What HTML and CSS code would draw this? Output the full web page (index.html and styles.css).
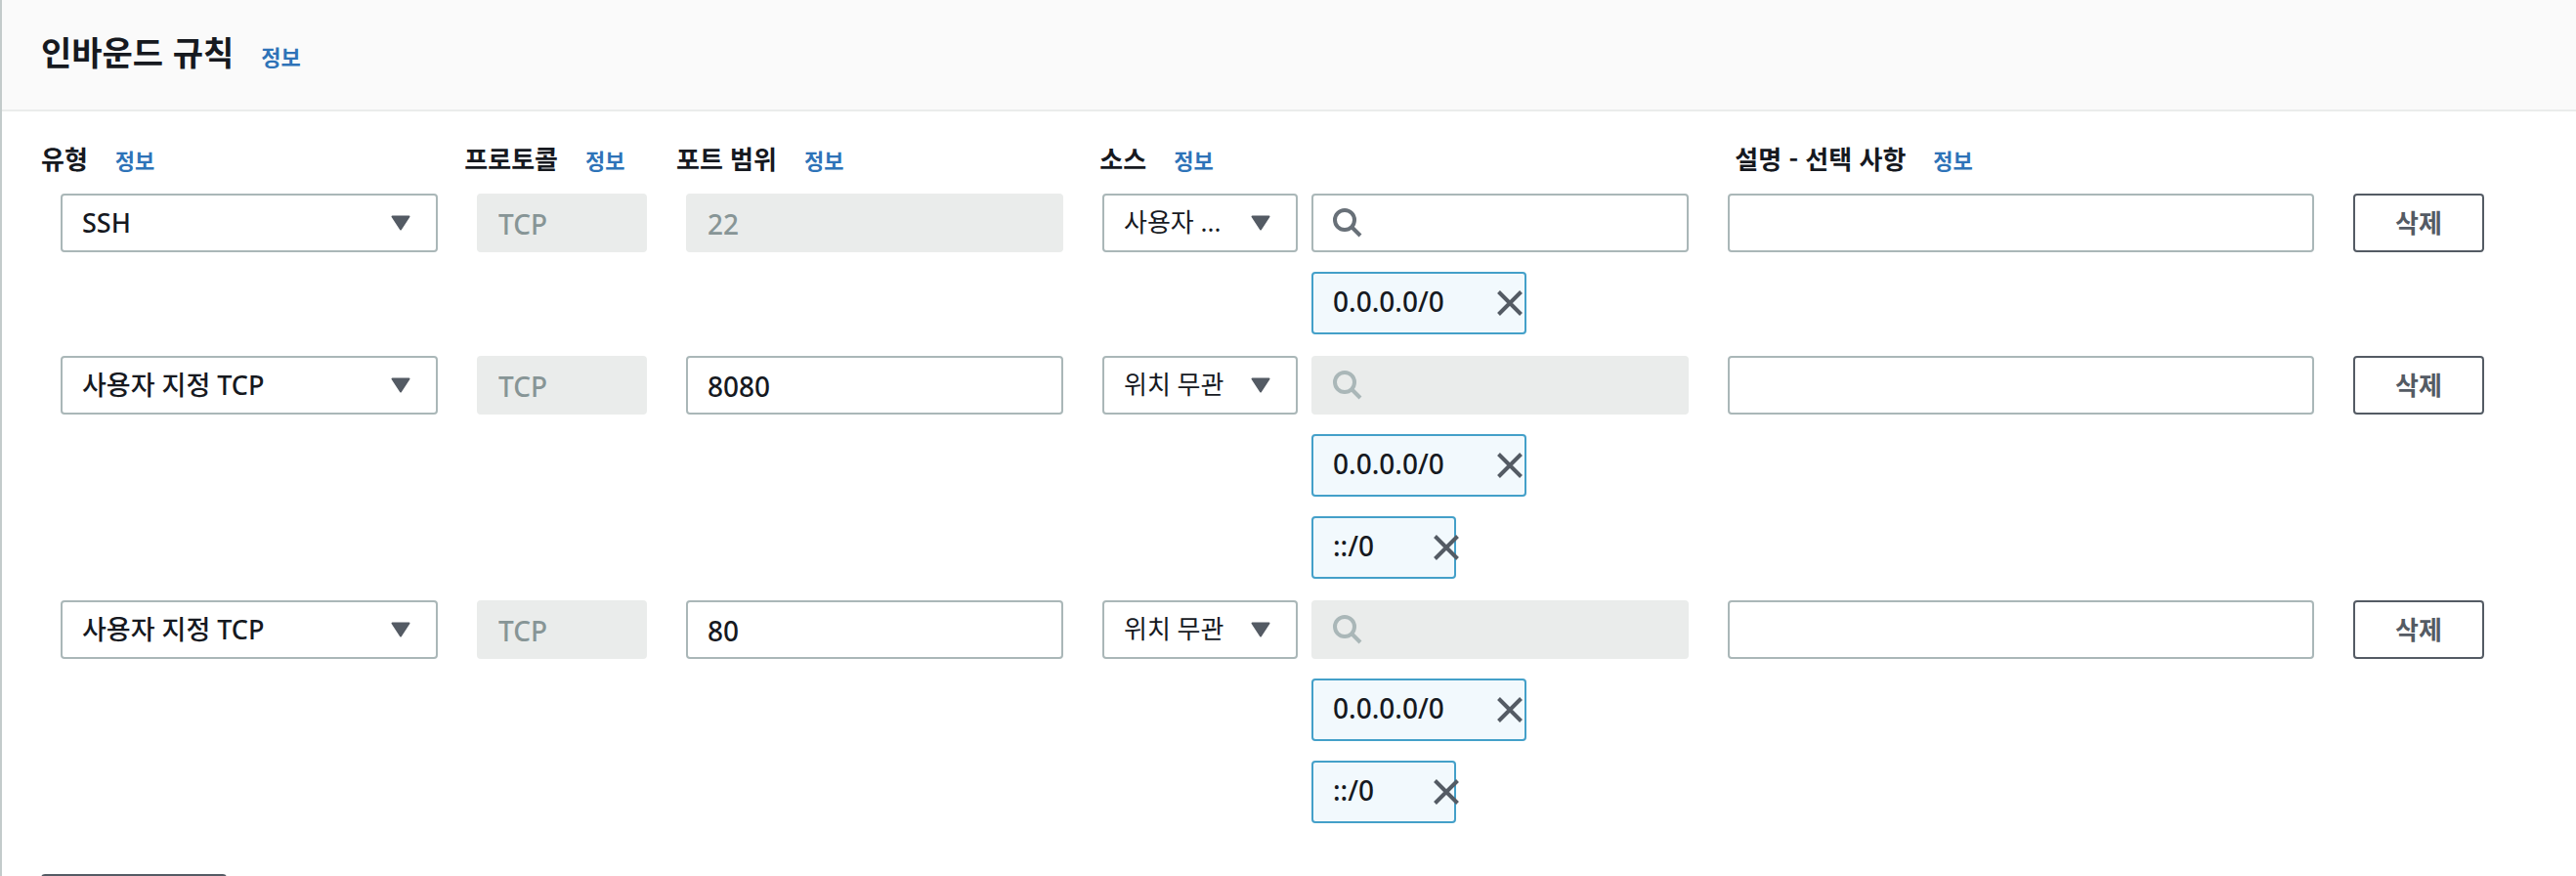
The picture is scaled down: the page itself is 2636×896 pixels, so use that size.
FILE: index.html
```html
<!DOCTYPE html>
<html lang="ko">
<head>
    <meta charset="UTF-8">
    <meta name="viewport" content="width=device-width, initial-scale=1.0">
    <title>인바운드 규칙</title>
    <link rel="stylesheet" href="styles.css">
</head>
<body>
    <!-- Shared icons -->
    <svg class="icon-defs" aria-hidden="true">
        <symbol id="icon-caret" viewBox="0 0 20 16">
            <path d="M1.5 1.5h17L10 14.5z" fill="currentColor" stroke="currentColor" stroke-width="2" stroke-linejoin="round"/>
        </symbol>
        <symbol id="icon-search" viewBox="0 0 30 30">
            <circle cx="12" cy="12" r="10" fill="none" stroke="currentColor" stroke-width="4"/>
            <path d="M19 19l9 9" fill="none" stroke="currentColor" stroke-width="4"/>
        </symbol>
        <symbol id="icon-close" viewBox="0 0 26 26">
            <path d="M1.5 1.5l23 23M24.5 1.5l-23 23" fill="none" stroke="currentColor" stroke-width="4"/>
        </symbol>
    </svg>

    <main class="panel">
        <header class="panel-header">
            <h1>인바운드 규칙</h1>
            <a href="#" class="info">정보</a>
        </header>

        <form class="panel-body">
            <div class="labels">
                <div class="label"><span id="typeLabel">유형</span><a href="#" class="info">정보</a></div>
                <div class="label"><span id="protocolLabel">프로토콜</span><a href="#" class="info">정보</a></div>
                <div class="label"><span id="portLabel">포트 범위</span><a href="#" class="info">정보</a></div>
                <div class="label"><span id="sourceLabel">소스</span><a href="#" class="info">정보</a></div>
                <div class="label"><span id="descLabel">설명 - 선택 사항</span><a href="#" class="info">정보</a></div>
            </div>

            <div class="rules">
                <div class="rule">
                    <div class="select">
                        <select aria-labelledby="typeLabel"><option>SSH</option></select>
                        <svg class="caret"><use href="#icon-caret"/></svg>
                    </div>
                    <input type="text" class="input" value="TCP" aria-labelledby="protocolLabel" disabled>
                    <input type="text" class="input" value="22" aria-labelledby="portLabel" disabled>
                    <div class="source">
                        <div class="select source-select">
                            <select aria-labelledby="sourceLabel"><option>사용자 ...</option></select>
                            <svg class="caret"><use href="#icon-caret"/></svg>
                        </div>
                        <div class="source-values">
                            <div class="search">
                                <input type="search" class="input" aria-labelledby="sourceLabel">
                                <svg class="search-icon"><use href="#icon-search"/></svg>
                            </div>
                            <div class="tag">0.0.0.0/0<button type="button" class="tag-close" aria-label="0.0.0.0/0 제거"><svg><use href="#icon-close"/></svg></button></div>
                        </div>
                    </div>
                    <input type="text" class="input" aria-labelledby="descLabel">
                    <button type="button" class="btn">삭제</button>
                </div>

                <div class="rule">
                    <div class="select">
                        <select aria-labelledby="typeLabel"><option>사용자 지정 TCP</option></select>
                        <svg class="caret"><use href="#icon-caret"/></svg>
                    </div>
                    <input type="text" class="input" value="TCP" aria-labelledby="protocolLabel" disabled>
                    <input type="text" class="input" value="8080" aria-labelledby="portLabel">
                    <div class="source">
                        <div class="select source-select">
                            <select aria-labelledby="sourceLabel"><option>위치 무관</option></select>
                            <svg class="caret"><use href="#icon-caret"/></svg>
                        </div>
                        <div class="source-values">
                            <div class="search">
                                <input type="search" class="input" aria-labelledby="sourceLabel" disabled>
                                <svg class="search-icon"><use href="#icon-search"/></svg>
                            </div>
                            <div class="tag">0.0.0.0/0<button type="button" class="tag-close" aria-label="0.0.0.0/0 제거"><svg><use href="#icon-close"/></svg></button></div>
                            <div class="tag">::/0<button type="button" class="tag-close" aria-label="::/0 제거"><svg><use href="#icon-close"/></svg></button></div>
                        </div>
                    </div>
                    <input type="text" class="input" aria-labelledby="descLabel">
                    <button type="button" class="btn">삭제</button>
                </div>

                <div class="rule">
                    <div class="select">
                        <select aria-labelledby="typeLabel"><option>사용자 지정 TCP</option></select>
                        <svg class="caret"><use href="#icon-caret"/></svg>
                    </div>
                    <input type="text" class="input" value="TCP" aria-labelledby="protocolLabel" disabled>
                    <input type="text" class="input" value="80" aria-labelledby="portLabel">
                    <div class="source">
                        <div class="select source-select">
                            <select aria-labelledby="sourceLabel"><option>위치 무관</option></select>
                            <svg class="caret"><use href="#icon-caret"/></svg>
                        </div>
                        <div class="source-values">
                            <div class="search">
                                <input type="search" class="input" aria-labelledby="sourceLabel" disabled>
                                <svg class="search-icon"><use href="#icon-search"/></svg>
                            </div>
                            <div class="tag">0.0.0.0/0<button type="button" class="tag-close" aria-label="0.0.0.0/0 제거"><svg><use href="#icon-close"/></svg></button></div>
                            <div class="tag">::/0<button type="button" class="tag-close" aria-label="::/0 제거"><svg><use href="#icon-close"/></svg></button></div>
                        </div>
                    </div>
                    <input type="text" class="input" aria-labelledby="descLabel">
                    <button type="button" class="btn">삭제</button>
                </div>
            </div>

            <button type="button" class="btn btn-add" aria-label="규칙 추가"></button>
        </form>
    </main>
</body>
</html>
```
FILE: styles.css
```css
* {
    margin: 0;
    padding: 0;
    box-sizing: border-box;
}

body {
    font-family: "Noto Sans", "Noto Sans CJK KR", sans-serif;
    font-size: 28px;
    font-weight: 500;
    color: #16191f;
    background: #fff;
    height: 100vh;
    overflow: hidden;
}

input,
select,
button {
    font: inherit;
    color: inherit;
}

.icon-defs {
    display: none;
}

.panel {
    min-height: 100vh;
    border-left: 2px solid #c3cbcb;
}

.panel-header {
    display: flex;
    align-items: baseline;
    gap: 28px;
    padding: 28px 40px 34px;
    background: #fafafa;
    border-bottom: 2px solid #eaeceb;
}

.panel-header h1 {
    font-family: "Noto Sans CJK KR", sans-serif;
    font-size: 34px;
    line-height: 50px;
    font-weight: 700;
}

.info {
    font-family: "Noto Sans CJK KR", sans-serif;
    font-size: 22px;
    font-weight: 700;
    color: #2e73b8;
    text-decoration: none;
}

.info:hover {
    text-decoration: underline;
}

.panel-body {
    padding-top: 28px;
}

.labels {
    display: grid;
    grid-template-columns: 2fr 1fr 2fr 3fr 4fr;
    padding-left: 40px;
    margin-right: -6px;
    margin-bottom: 15px;
}

.label {
    display: flex;
    align-items: baseline;
    gap: 28px;
    font-family: "Noto Sans CJK KR", sans-serif;
    font-size: 26px;
    line-height: 40px;
    font-weight: 700;
    white-space: nowrap;
}

.rules {
    display: grid;
    gap: 22px;
    padding: 0 94px 0 60px;
}

.rule {
    display: grid;
    grid-template-columns: 386fr 174fr 386fr 600fr 600fr 134px;
    gap: 40px;
    align-items: start;
}

.input,
.select select {
    width: 100%;
    min-width: 0;
    height: 60px;
    padding: 0 20px;
    border: 2px solid #aab7b8;
    border-radius: 4px;
    background: #fff;
    appearance: none;
    outline: none;
}

.input {
    padding-top: 2px;
}

.input:focus,
.select select:focus {
    border-color: #44a0c9;
}

.input:disabled {
    background: #eaeceb;
    border-color: #eaeceb;
    color: #879596;
}

/* control and its icon share one grid cell */
.select,
.search {
    display: grid;
    align-items: center;
}

.select select,
.select .caret,
.search .input,
.search .search-icon {
    grid-area: 1 / 1;
}

.select select {
    font-size: 27px;
    padding-right: 60px;
    padding-bottom: 2px;
}

.caret {
    width: 20px;
    height: 16px;
    margin-right: 28px;
    justify-self: end;
    color: #545b64;
    pointer-events: none;
}

.source {
    display: grid;
    grid-template-columns: 200fr 386fr;
    gap: 14px;
    align-items: start;
}

.source-select select {
    font-size: 26px;
    font-weight: 400;
    padding-right: 50px;
}

.source-values {
    display: flex;
    flex-direction: column;
    align-items: flex-start;
    gap: 20px;
}

.search {
    width: 100%;
}

.search .input {
    padding-left: 62px;
}

.search-icon {
    width: 30px;
    height: 30px;
    margin-left: 22px;
    color: #687078;
    pointer-events: none;
}

.input:disabled + .search-icon {
    color: #aab7b8;
}

.tag {
    position: relative;
    height: 64px;
    padding: 0 82px 0 20px;
    border: 2px solid #44a0c9;
    border-radius: 4px;
    background: #f2f9fd;
    line-height: 56px;
}

/* the cross may run over the edge of a short tag */
.tag-close {
    position: absolute;
    top: 17px;
    left: calc(92% - 10px);
    width: 26px;
    height: 26px;
    border: none;
    background: none;
    color: #545b64;
    cursor: pointer;
}

.tag-close svg {
    display: block;
    width: 26px;
    height: 26px;
}

.btn {
    height: 60px;
    padding-bottom: 4px;
    border: 2px solid #545b64;
    border-radius: 4px;
    background: #fff;
    color: #545b64;
    font-family: "Noto Sans CJK KR", sans-serif;
    font-size: 26px;
    font-weight: 700;
    cursor: pointer;
}

.btn:hover {
    background: #fafafa;
}

.btn-add {
    display: block;
    width: 190px;
    margin: 52px 0 0 40px;
}
```
